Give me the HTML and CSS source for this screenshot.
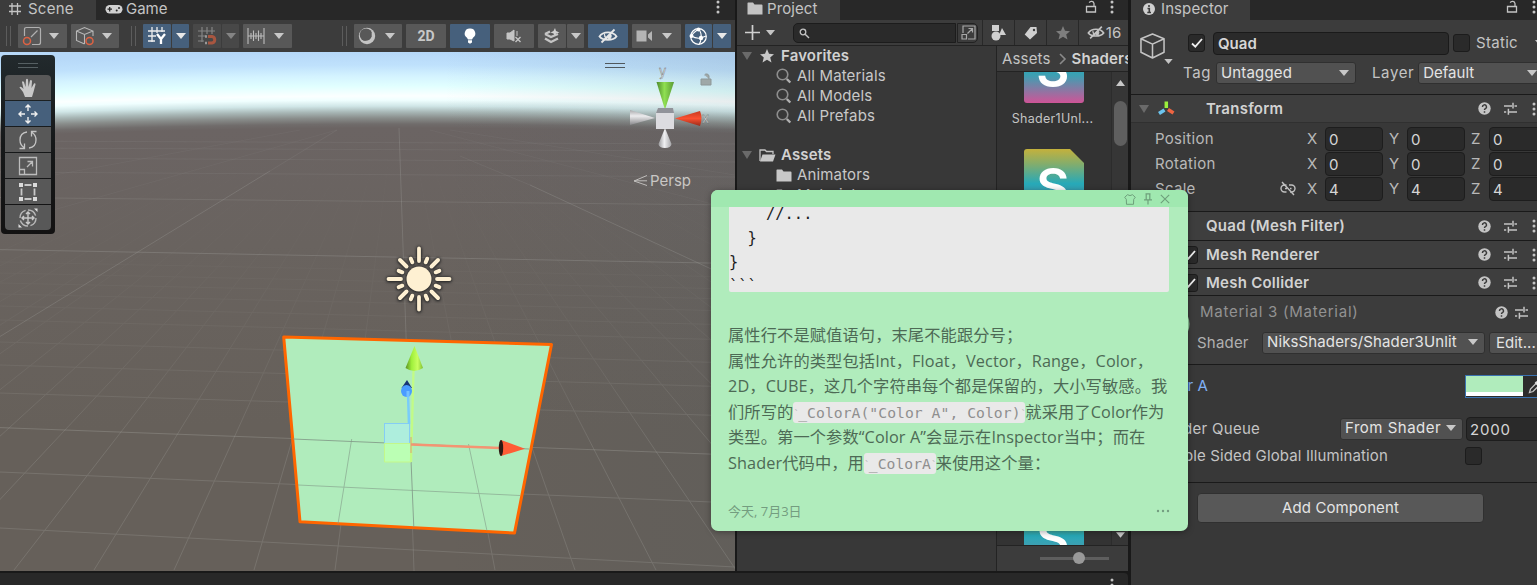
FILE: index.html
```html
<!DOCTYPE html>
<html lang="zh-CN">
<head>
<meta charset="utf-8">
<title>Scene editor</title>
<link rel="stylesheet" href="styles.css">
</head>
<body>
<svg class="defs" width="0" height="0">
  <defs>
    <linearGradient id="shaderFill" x1="0" y1="0" x2="0" y2="1">
      <stop offset="0" stop-color="#c4b13c"/><stop offset=".2" stop-color="#86ad6a"/><stop offset=".48" stop-color="#27a9b8"/><stop offset=".62" stop-color="#3e9fb2"/><stop offset="1" stop-color="#cf5497"/>
    </linearGradient>
    <linearGradient id="fade" x1="0" y1="0" x2="0" y2="1">
      <stop offset=".14" stop-color="#000"/><stop offset=".35" stop-color="#1c1c1c"/><stop offset=".52" stop-color="#555"/><stop offset=".64" stop-color="#999"/><stop offset=".78" stop-color="#fff"/>
    </linearGradient>
    <mask id="fadeMask" maskUnits="userSpaceOnUse" x="0" y="52" width="735" height="519"><rect x="0" y="52" width="735" height="519" fill="url(#fade)"/></mask>
    <linearGradient id="greenCone"><stop offset="0" stop-color="#4d8a2c"/><stop offset=".45" stop-color="#90e052"/><stop offset="1" stop-color="#5a9b35"/></linearGradient>
    <linearGradient id="limeCone"><stop offset="0" stop-color="#5a8f22"/><stop offset=".35" stop-color="#a0f03c"/><stop offset=".7" stop-color="#c8ff60"/><stop offset="1" stop-color="#7fbf30"/></linearGradient>
    <linearGradient id="redCone" x1="0" y1="0" x2="0" y2="1"><stop offset="0" stop-color="#c63a20"/><stop offset=".5" stop-color="#fa5030"/><stop offset="1" stop-color="#9a2c1a"/></linearGradient>
    <linearGradient id="whiteH"><stop offset="0" stop-color="#9a9a9d"/><stop offset=".45" stop-color="#f0f0f2"/><stop offset="1" stop-color="#a5a5a8"/></linearGradient>
    <linearGradient id="whiteV" x1="0" y1="0" x2="0" y2="1"><stop offset="0" stop-color="#a8a8ab"/><stop offset=".4" stop-color="#ececee"/><stop offset="1" stop-color="#88888b"/></linearGradient>
    <symbol id="caret" viewBox="0 0 10 6"><path d="M0 0H10L5 6Z"/></symbol>
    <symbol id="dots" viewBox="0 0 4 14"><circle cx="2" cy="2" r="1.5"/><circle cx="2" cy="7" r="1.5"/><circle cx="2" cy="12" r="1.5"/></symbol>
    <symbol id="lock" viewBox="0 0 12 13"><path d="M1.500 6.500H10.500V12H1.500ZM9 6V3.500A2.600 2.600 0 0 0 4.200 2.600" fill="none" stroke="currentColor" stroke-width="1.300"/></symbol>
    <symbol id="folder" viewBox="0 0 16 13"><path d="M1 .5H6L7.500 2.500H14.500Q15.500 2.500 15.500 3.500V12.500H.5V1Z"/></symbol>
    <symbol id="star" viewBox="0 0 14 14"><path d="M7 0L9 4.800L14 5.200L10.200 8.500L11.500 13.600L7 10.800L2.500 13.600L3.800 8.500L0 5.200L5 4.800Z"/></symbol>
    <symbol id="search" viewBox="0 0 16 16"><circle cx="6.500" cy="6.500" r="5.300" fill="none" stroke="#8e8e8e" stroke-width="1.600"/><path d="M10.800 11L14.300 14.500" stroke="#b0b0b0" stroke-width="2.400"/></symbol>
    <symbol id="eyeoff" viewBox="0 0 20 16"><path d="M1.500 8.500C5 3 15 3 18.500 8.500C15 13 5 13 1.500 8.500Z" fill="none" stroke="currentColor" stroke-width="1.800"/><path d="M6.500 6Q6 10 9 11M9 9.500L12.500 5.500Q14 8 12.500 10.500Q10.500 12 9 9.500Z" fill="currentColor" stroke="currentColor" stroke-width="1"/><path d="M3.500 14.500L16.500 1.500" stroke="currentColor" stroke-width="1.800"/></symbol>
    <symbol id="help" viewBox="0 0 13 13"><circle cx="6.500" cy="6.500" r="6.200"/><path d="M4.500 5A2 2 0 1 1 7.400 6.600Q6.500 7 6.500 8M6.500 9.200V10.800" fill="none" stroke="#3a3a3a" stroke-width="1.500"/></symbol>
    <symbol id="preset" viewBox="0 0 13 13"><path d="M0 4H8M10.500 4H13M9 .8V6.500M0 10H2.200M5 10H13M4.400 6.800V12.800" fill="none" stroke="currentColor" stroke-width="1.500"/></symbol>
    <symbol id="cube" viewBox="0 0 26 27"><path d="M13 1L25 6V20L13 26L1 20V6ZM1 6L13 11.500L25 6M13 11.500V26" fill="none" stroke="currentColor" stroke-width="1.600" stroke-linejoin="round"/></symbol>
    <symbol id="check" viewBox="0 0 12 10"><path d="M1 5.500L4.300 8.700L11 1" fill="none" stroke="#eee" stroke-width="1.800"/></symbol>
    <symbol id="shader" viewBox="0 0 60 72"><path d="M3 0H46L60 14V69Q60 72 57 72H3Q0 72 0 69V3Q0 0 3 0Z" fill="url(#shaderFill)"/><text x="29" y="56" text-anchor="middle" class="shader-s">S</text></symbol>
  </defs>
</svg>
<div class="editor">
  <div class="left">
    <div class="docks">
      <section class="scene">
        <header class="tabs">
          <div class="tab scene-tab">
            <svg width="14" height="14" viewBox="0 0 14 14"><path d="M4 1V13M9.500 1V13M1 4H13M1 9.500H13" stroke="#c4c4c4" stroke-width="1.300"/></svg><span>Scene</span></div>
          <div class="tab game-tab">
            <svg width="18" height="11" viewBox="0 0 18 11"><rect x=".5" y="1" width="17" height="8.500" rx="4.200" fill="#d0d0d0"/><path d="M2.500 5.200H7M4.700 3V7.500" stroke="#282828" stroke-width="1.300"/><circle cx="11.700" cy="6.500" r="1" fill="#282828"/><circle cx="14" cy="4" r="1" fill="#282828"/></svg><span>Game</span></div>
          <svg class="menu" width="4" height="14"><use href="#dots"/></svg>
        </header>
        <div class="toolbar">
          <i class="grip"></i>
          <button class="b w49"><svg width="20" height="20" viewBox="0 0 20 20"><path d="M2.500 10V3.500Q2.500 1.500 4.500 1.500H16.500Q18.500 1.500 18.500 3.500V16.500Q18.500 18.500 16.500 18.500H10M9 11L15.500 4.500" fill="none" stroke="#b0b0b0" stroke-width="1.200"/><circle cx="5" cy="15" r="3.500" fill="none" stroke="#dd6243" stroke-width="1.500"/></svg><svg width="10" height="6"><use href="#caret"/></svg></button>
          <button class="b w48 gap4"><svg width="20" height="20" viewBox="0 0 20 20"><path d="M9.500 18L1.500 14.500V5L9.500 1.500L18 5V10M1.500 5L9.500 8.500L18 5M9.500 8.500V18" fill="none" stroke="#b8b8b8" stroke-width="1.100"/><circle cx="14.500" cy="15" r="3.500" fill="none" stroke="#dd6243" stroke-width="1.500"/></svg><svg width="10" height="6"><use href="#caret"/></svg></button>
          <i class="grip g2"></i>
          <button class="b w28 on"><svg width="19" height="18" viewBox="0 0 19 18"><path d="M4 0V15M9 0V6M14 0V5M0 4H17M0 9H8M0 14H7" stroke="#eee" stroke-width="1.300"/><path d="M9 7L13 12V17M17 7L13 12" stroke="#fff" stroke-width="2.300" fill="none"/></svg></button>
          <button class="b w17 on"><svg width="10" height="6"><use href="#caret"/></svg></button>
          <button class="b w28 off gap4"><svg width="19" height="18" viewBox="0 0 19 18"><path d="M4 0V15M9 0V7M14 0V7M0 4H17M0 9H8M0 14H6" stroke="#858585" stroke-width="1.200"/><path d="M10 9.500H14A3.300 3.300 0 0 1 14 16H10" stroke="#a85640" stroke-width="3" fill="none"/><path d="M7 9.500H9M7 16H9" stroke="#999" stroke-width="2.500"/></svg></button>
          <button class="b w17 off"><svg width="10" height="6"><use href="#caret"/></svg></button>
          <button class="b w49 gap4"><svg width="18" height="18" viewBox="0 0 18 18"><path d="M1 1V17M17 1V17M4 6V12M6.500 3.500V14M9 6V12M11.500 3.500V14M14 6V12M1 9H17" stroke="#bdbdbd" stroke-width="1.100"/></svg><svg class="near" width="10" height="6"><use href="#caret"/></svg></button>
          <i class="grip g3"></i>
          <button class="b w48"><svg width="18" height="18" viewBox="0 0 18 18"><circle cx="9" cy="9" r="8.200" fill="#c4c4c4"/><circle cx="8" cy="7.800" r="6.300" fill="#585858"/><path d="M14.500 6V10Q12 15 7.500 14.500" fill="none" stroke="#c4c4c4" stroke-width="1.600"/></svg><svg class="near" width="10" height="6"><use href="#caret"/></svg></button>
          <button class="b w40 gap4 two">2D</button>
          <button class="b w40 gap4 on"><svg width="12" height="16" viewBox="0 0 12 16"><path d="M6 .5A5 5 0 0 1 9 9.700L8 11.500H4L3 9.700A5 5 0 0 1 6 .5ZM4 12.300H8V14.500L6 15.700L4 14.500Z" fill="#fff"/></svg></button>
          <button class="b w40 gap4"><svg width="16" height="14" viewBox="0 0 16 14"><path d="M1 4H4L8 1V12L4 10H1ZM11 2V7" fill="#c4c4c4" stroke="#c4c4c4"/><path d="M9.500 8L14.500 13M14.500 8L9.500 13" stroke="#c4c4c4" stroke-width="1.400"/></svg></button>
          <button class="b w28 gap4"><svg width="16" height="16" viewBox="0 0 16 16"><path d="M1 6L7 9L14 6M1 6L6 3.500M1 10.500L7 14L14 10.500" fill="none" stroke="#c4c4c4" stroke-width="2.300"/><path d="M11 0L12 3L15.500 4.500L12 5.500L11 8L9.500 5.500L6.500 4.500L9.500 3Z" fill="#d0d0d0"/></svg></button>
          <button class="b w17"><svg width="10" height="6"><use href="#caret"/></svg></button>
          <button class="b w40 gap4 on"><svg width="20" height="16"><use href="#eyeoff"/></svg></button>
          <button class="b w49 gap4"><svg width="17" height="12" viewBox="0 0 17 12"><path d="M.5 .5H10.500V11.500H.5ZM12 4.500L16 1V11L12 7.500Z" fill="#b4b4b4"/></svg><svg class="near" width="10" height="6"><use href="#caret"/></svg></button>
          <button class="b w27 gap4 on"><svg width="19" height="19" viewBox="0 0 19 19"><circle cx="9.500" cy="9.500" r="7.800" fill="none" stroke="#fff" stroke-width="1.200"/><path d="M9.500 2Q13 6 12 11Q12 15 10 17.500M2.500 9Q7 12 12 11L17 9M9.500 2Q3 7 2.500 9" stroke="#fff" stroke-width="1.100" fill="none"/><circle cx="9.500" cy="2.500" r="2" fill="#fff"/><circle cx="2.500" cy="9" r="2" fill="#fff"/><circle cx="12" cy="11" r="2.200" fill="#fff"/></svg></button>
          <button class="b w18 on"><svg width="10" height="6"><use href="#caret"/></svg></button>
        </div>
        <div class="viewport">
          <svg class="world" width="735" height="519" viewBox="0 52 735 519">
            <g fill="none" stroke="#a7a7a2" stroke-width="1">
              <g mask="url(#fadeMask)" opacity=".26">
                <path d="M400 72L-1190 570M400 72L-1030 570M400 72L-869 570M400 72L-709 570M400 72L-628 570M400 72L-548 570M400 72L-468 570M400 72L-387 570M400 72L-307 570M400 72L-227 570M400 72L-147 570M400 72L-66 570M400 72L14 570M400 72L94 570M400 72L174 570M400 72L254 570M400 72L335 570M400 72L495 570M400 72L575 570M400 72L656 570M400 72L736 570M400 72L817 570M400 72L897 570M400 72L978 570M400 72L1058 570M400 72L1138 570M400 72L1298 570M400 72L1379 570M400 72L1459 570M400 72L1539 570M400 72L1700 570M400 72L1860 570M400 72L2020 570"/>
                <path d="M0 262L735 277M0 273L735 289M0 283L735 299M0 294L735 311M0 306L735 325M0 320L735 340M0 342L735 363M0 365L735 387M0 393L735 416M0 472L735 503M0 528L735 567"/>
              </g>
              <path d="M0 427.600L735 455" opacity=".34"/>
              <path d="M0 249.600L735 263.500" opacity=".3"/>
              <path d="M0 197.500L735 205" opacity=".2"/>
              <path d="M0 172L735 177M0 158L735 162M0 148L735 151M0 141L735 144" opacity=".12"/>
              <path d="M270 171L0 336.500M530 185L735 280" opacity=".28"/>
              <path d="M337 130L270 171M460 156L530 185" opacity=".12"/>
              <path d="M337 130L0 225M300 130L0 185M430 130L735 210M450 130L735 175" opacity=".08"/>
              <path d="M399 128L414 571" opacity=".28"/>
            </g>
            <path d="M283.700 337L551.500 344.500L514.500 533L300 521.800Z" fill="#b0ecbc" stroke="#ff6600" stroke-width="3" stroke-linejoin="round"/>
            <path d="M298 485L520 495.500M351.700 439L338 524M468.500 444L487 531" stroke="#829a88" stroke-width="1" opacity=".6"/>
            <path d="M293 439L529 449M411 460L413.800 527" stroke="#829a88" opacity=".85"/>
            <rect x="384.500" y="423.500" width="25" height="20" fill="#aeeedd" stroke="#85cdf5"/>
            <path d="M384.500 443.500H411V462H384.500Z" fill="#bbffb4" stroke="#c3f78a"/>
            <path d="M408 393L409 424" stroke="#79ccfa" stroke-width="2.500"/>
            <path d="M413.500 371L411 462" stroke="#c2fb86" stroke-width="2.300"/>
            <path d="M411 444.500L500 448" stroke="#f49472" stroke-width="2.400"/>
            <path d="M411 437V453" stroke="#dd9e78" stroke-width="1"/>
            <path d="M414.500 346L423 368Q414 374 405.500 368Z" fill="url(#limeCone)"/>
            <path d="M407 380L412 388H401.500Z" fill="#183474"/><ellipse cx="406.500" cy="391" rx="5.500" ry="6" fill="#4a9cff"/><path d="M408 391V397" stroke="#75c0ff" stroke-width="3"/>
            <path d="M501 440L525 448.800L501 456Z" fill="#ff5c35"/><ellipse cx="501" cy="448" rx="2.200" ry="8" fill="#2e1a14"/>
            <g class="sun">
              <circle cx="419" cy="279" r="12.500"/>
              <g class="rays">
                <path d="M419 248.500V261M419 297V309.500M388.500 279H401M437 279H449.500" stroke-width="3.800"/>
                <path d="M400 260L406.500 266.500M438 260L431.500 266.500M400 298L406.500 291.500M438 298L431.500 291.500" stroke-width="4"/>
                <path d="M410.800 258.700L412.300 262.300M427.200 258.700L425.700 262.300M410.800 299.300L412.300 295.700M427.200 299.300L425.700 295.700M398.700 270.800L402.300 272.300M398.700 287.200L402.300 285.700M439.300 270.800L435.700 272.300M439.300 287.200L435.700 285.700" stroke-width="4"/>
              </g>
            </g>
            <path d="M605 63.500H625M605 67.500H625" stroke="#50585d" stroke-width="1"/>
            <path d="M656.500 82H674L665.500 108H664.500Z" fill="url(#greenCone)"/>
            <path d="M630 110L655 118L630 125Z" fill="url(#whiteV)"/>
            <path d="M675 118.500L700 111Q703 118 700 126Z" fill="url(#redCone)"/>
            <path d="M656 113L658 108H673L674 113V129H656Z" fill="#dcdce0"/><path d="M656 113L658 108H673L674 113Z" fill="#91939a"/>
            <path d="M665 128L671.500 144Q671 148 665 148Q659 148 658.500 144Z" fill="url(#whiteH)"/>
            <text x="659" y="76" class="axis">y</text><text x="702" y="122.500" class="axis">x</text>
            <path d="M701 79H711V85H701ZM709 79V76A2.500 2.500 0 0 0 704.500 75" fill="#9fa8a8" stroke="#8e9898"/>
            <path d="M647 175.500L634 181L647 185.500M634 180.800H647" fill="none" stroke="#c0bebc" stroke-width="1"/>
            <text x="650" y="186" class="persp">Persp</text>
          </svg>
          <div class="tools">
            <i class="handle"></i>
            <div class="tool"><svg width="20" height="20" viewBox="0 0 20 20"><path d="M7 19L5 14L1.500 9.500Q2 8 4 9.500L5.500 11L4 4Q4.500 2.500 6 4L7.500 9L8 1.500Q9 .2 10 1.500L10.500 9L12 2.500Q13.300 1.500 14 3L13.500 10L16 5.500Q17.500 4.700 17.500 6.500L15.500 14L14 19Z" fill="#c8c8c8"/></svg></div>
            <div class="tool on"><svg width="20" height="20" viewBox="0 0 20 20"><path d="M10 1V7M10 13V19M1 10H7M13 10H19M7.500 3.500L10 1L12.500 3.500M7.500 16.500L10 19L12.500 16.500M3.500 7.500L1 10L3.500 12.500M16.500 7.500L19 10L16.500 12.500" fill="none" stroke="#f0f0f0" stroke-width="1.400"/></svg></div>
            <div class="tool"><svg width="20" height="20" viewBox="0 0 20 20"><path d="M9 2Q2 3 2 10Q2 15 6 17.500M1.500 18.500H6.500V13.500M11 18Q18 17 18 10Q18 5 14 2.500M18.500 1.500H13.500V6.500" fill="none" stroke="#c4c4c4" stroke-width="1.300"/></svg></div>
            <div class="tool"><svg width="20" height="20" viewBox="0 0 20 20"><path d="M1.500 1.500H18.500V18.500H1.500ZM1.500 13.500H6.500V18.500M9 11L14.500 5.500M9.500 5.500H14.500V10.500" fill="none" stroke="#bcbcbc" stroke-width="1.300"/></svg></div>
            <div class="tool"><svg width="20" height="20" viewBox="0 0 20 20"><path d="M1 1H5V5H1ZM15 1H19V5H15ZM1 15H5V19H1ZM15 15H19V19H15Z" fill="#dadada"/><path d="M6.500 3H13.500M6.500 17H13.500M3.500 6.500V13.500M16.500 6.500V13.500" stroke="#c8c8c8" stroke-width="1.800"/></svg></div>
            <div class="tool"><svg width="20" height="20" viewBox="0 0 20 20"><circle cx="10" cy="10" r="8" fill="none" stroke="#b8b8b8" stroke-width="1.400" stroke-dasharray="10 2.500"/><path d="M10 4V16M4 10H16M8 6L10 4L12 6M8 14L10 16L12 14M6 8L4 10L6 12M14 8L16 10L14 12" fill="none" stroke="#c8c8c8" stroke-width="1.400"/><path d="M16 .5H19.500V4ZM.5 16V19.500H4Z" fill="#ddd"/></svg></div>
          </div>
        </div>
      </section>
      <section class="project">
        <header class="tabs">
          <div class="tab project-tab"><svg width="16" height="13"><use href="#folder"/></svg><span>Project</span></div>
          <svg class="plock" width="12" height="13"><use href="#lock"/></svg>
          <svg class="menu" width="4" height="14"><use href="#dots"/></svg>
        </header>
        <div class="pbar">
          <svg class="plus" width="15" height="15" viewBox="0 0 15 15"><path d="M7.500 0V15M0 7.500H15" stroke="#d0d0d0" stroke-width="1.700"/></svg>
          <svg class="pluscar" width="9" height="5.400"><use href="#caret"/></svg>
          <div class="find"><svg width="11" height="11" viewBox="0 0 11 11"><circle cx="4" cy="4" r="2.800" fill="none" stroke="#c4c4c4" stroke-width="1.300"/><path d="M6.200 6.200L10 10" stroke="#c4c4c4" stroke-width="1.400"/></svg></div>
          <div class="expand"><svg width="15" height="15" viewBox="0 0 15 15"><path d="M2 8V1H14V14H7M1 9.500H5.500V14H1ZM6.500 8.500L11.500 3.500M7.500 3.500H11.500V7.500" fill="none" stroke="#a8a8a8" stroke-width="1.200"/></svg></div>
          <div class="pb"><svg width="15" height="17" viewBox="0 0 15 17"><path d="M1 1H8V7H1ZM11 4L15 11H8Z" fill="#cfcfcf"/><circle cx="5" cy="12" r="4.500" fill="#cfcfcf"/></svg></div>
          <div class="pb"><svg width="14" height="14" viewBox="0 0 14 14"><path d="M6.500 1H12.500L13 7L6 13.500L.7 8.500Z" fill="#d0d0d0"/><circle cx="10" cy="4" r="1.200" fill="#3c3c3c"/></svg></div>
          <div class="pb dim"><svg width="14" height="14"><use href="#star"/></svg></div>
          <div class="pb hidden-count"><svg width="18" height="15"><use href="#eyeoff"/></svg><span>16</span></div>
        </div>
        <div class="pbody">
          <div class="tree">
            <div class="row group"><svg class="fold" width="10" height="8" viewBox="0 0 10 8"><path d="M0 0H10L5 8Z"/></svg><svg width="14" height="14"><use href="#star"/></svg><b>Favorites</b></div>
            <div class="row"><svg width="16" height="16"><use href="#search"/></svg><span>All Materials</span></div>
            <div class="row"><svg width="16" height="16"><use href="#search"/></svg><span>All Models</span></div>
            <div class="row"><svg width="16" height="16"><use href="#search"/></svg><span>All Prefabs</span></div>
            <div class="row group assets"><svg class="fold" width="10" height="8" viewBox="0 0 10 8"><path d="M0 0H10L5 8Z"/></svg><svg width="17" height="13" viewBox="0 0 17 13"><path d="M1 12V1H6L7.500 2.500H14V5" fill="none" stroke="#c4c4c4" stroke-width="1.300"/><path d="M3.500 5.500H16.500L14 12.500H1Z" fill="#c8c8c8"/></svg><b>Assets</b></div>
            <div class="row"><svg width="16" height="13"><use href="#folder"/></svg><span>Animators</span></div>
            <div class="row"><svg width="16" height="13"><use href="#folder"/></svg><span>Materials</span></div>
          </div>
          <div class="browser">
            <div class="crumbs"><span>Assets</span><svg width="7" height="12" viewBox="0 0 7 12"><path d="M1 1L6 6L1 11" fill="none" stroke="#8a8a8a" stroke-width="1.600"/></svg><b>Shaders</b></div>
            <div class="files">
              <div class="grid">
                <div class="file"><svg width="60" height="72"><use href="#shader"/></svg><span>Shader1Unl...</span></div>
                <div class="file"><svg width="60" height="72"><use href="#shader"/></svg></div>
                <div class="file"></div>
                <div class="file"></div>
                <div class="file"><svg width="60" height="72"><use href="#shader"/></svg></div>
              </div>
              <div class="scroll"><svg width="9" height="6" viewBox="0 0 9 6"><path d="M0 6L4.500 0L9 6Z"/></svg><i></i><svg width="9" height="6"><use href="#caret"/></svg></div>
            </div>
            <div class="zoom"><i></i></div>
          </div>
        </div>
      </section>
    </div>
    <footer class="bottom"><svg width="4" height="14"><use href="#dots"/></svg></footer>
  </div>
  <section class="inspector">
    <header class="tabs">
      <div class="tab inspector-tab"><svg width="12" height="12" viewBox="0 0 12 12"><circle cx="6" cy="6" r="6" fill="#d0d0d0"/><path d="M6 2V4M4.500 5.500H6.300V9.300M4.300 9.500H8" stroke="#3c3c3c" stroke-width="1.600" fill="none"/></svg><span>Inspector</span></div>
      <svg class="plock" width="12" height="13"><use href="#lock"/></svg>
      <svg class="menu" width="4" height="14"><use href="#dots"/></svg>
    </header>
    <div class="object">
      <div class="objicon"><svg width="25" height="26" viewBox="0 0 26 27"><use href="#cube" width="26" height="27"/></svg><svg class="objcar" width="9" height="5"><use href="#caret"/></svg></div>
      <div class="objfields">
        <div class="line"><i class="box"><svg width="12" height="10"><use href="#check"/></svg></i><div class="name">Quad</div><i class="box"></i><span class="static">Static</span><svg class="scar" width="10" height="6"><use href="#caret"/></svg></div>
        <div class="line two-line"><span>Tag</span><div class="drop tag">Untagged<svg width="10" height="6"><use href="#caret"/></svg></div><span class="layer">Layer</span><div class="drop lay">Default<svg width="10" height="6"><use href="#caret"/></svg></div></div>
      </div>
    </div>
    <div class="comp transform"><svg class="fold" width="10" height="8" viewBox="0 0 10 8"><path d="M0 0H10L5 8Z"/></svg><svg class="tri" width="17" height="15" viewBox="0 0 17 15"><path d="M8.300 .5V7" stroke="#9bee3c" stroke-width="3.500"/><path d="M6.500 9L1 12.500" stroke="#6cc4ee" stroke-width="3.600"/><path d="M10 8.500L15.500 12" stroke="#ee6542" stroke-width="3.600"/></svg><b>Transform</b><svg class="help" width="13" height="13"><use href="#help"/></svg><svg class="pre" width="13" height="13"><use href="#preset"/></svg><svg class="cm" width="4" height="14"><use href="#dots"/></svg></div>
    <div class="vectors">
      <div class="vec"><span class="lbl">Position</span><em>X</em><div class="fld">0</div><em>Y</em><div class="fld">0</div><em>Z</em><div class="fld">0</div></div>
      <div class="vec"><span class="lbl">Rotation</span><em>X</em><div class="fld">0</div><em>Y</em><div class="fld">0</div><em>Z</em><div class="fld">0</div></div>
      <div class="vec"><span class="lbl">Scale</span><svg class="link" width="16" height="13" viewBox="0 0 16 13"><path d="M6.500 3H4.500A3.400 3.400 0 0 0 4.500 10H6.500M9 3H11.500A3.400 3.400 0 0 1 11.500 10H10M5 6.500H7M10 6.500H11.500M2 0L14 13" fill="none" stroke="#c0c0c0" stroke-width="1.400"/></svg><em>X</em><div class="fld">4</div><em>Y</em><div class="fld">4</div><em>Z</em><div class="fld">4</div></div>
    </div>
    <div class="comp filter"><b>Quad (Mesh Filter)</b><svg class="help" width="13" height="13"><use href="#help"/></svg><svg class="pre" width="13" height="13"><use href="#preset"/></svg><svg class="cm" width="4" height="14"><use href="#dots"/></svg></div>
    <div class="comp renderer"><i class="box"><svg width="12" height="10"><use href="#check"/></svg></i><b>Mesh Renderer</b><svg class="help" width="13" height="13"><use href="#help"/></svg><svg class="pre" width="13" height="13"><use href="#preset"/></svg><svg class="cm" width="4" height="14"><use href="#dots"/></svg></div>
    <div class="comp collider"><i class="box"><svg width="12" height="10"><use href="#check"/></svg></i><b>Mesh Collider</b><svg class="help" width="13" height="13"><use href="#help"/></svg><svg class="pre" width="13" height="13"><use href="#preset"/></svg><svg class="cm" width="4" height="14"><use href="#dots"/></svg></div>
    <div class="material">
      <div class="mtitle"><span>Material 3 (Material)</span><svg class="help" width="13" height="13"><use href="#help"/></svg><svg class="pre" width="13" height="13"><use href="#preset"/></svg></div>
      <div class="mshader"><svg class="ball" width="14" height="38" viewBox="0 0 14 38"><circle cx="-10.500" cy="19" r="19" fill="#8fc79b"/></svg><span>Shader</span><div class="drop shad">NiksShaders/Shader3Unlit<svg width="10" height="6"><use href="#caret"/></svg></div><div class="edit">Edit...</div></div>
    </div>
    <div class="props">
      <div class="prop color"><span class="plabel">Color A</span><div class="swatch"><i></i><svg width="15" height="15" viewBox="0 0 15 15"><path d="M1.500 13.500L2.500 10L8.500 4L11 6.500L5 12.500Z" fill="none" stroke="#c4c4c4" stroke-width="1.300"/><path d="M7.500 3L12 7.500M10 5L13 2" stroke="#ddd" stroke-width="2.500"/></svg></div></div>
      <div class="prop queue"><span class="plabel">Render Queue</span><div class="drop q">From Shader<svg width="10" height="6"><use href="#caret"/></svg></div><div class="fld num">2000</div></div>
      <div class="prop gi"><span class="plabel">Double Sided Global Illumination</span><i class="box"></i></div>
    </div>
    <div class="addwrap"><div class="add">Add Component</div></div>
  </section>
</div>
<aside class="note">
  <div class="nhead">
    <svg width="12" height="11" viewBox="0 0 12 11"><path d="M3.500 .7Q6 2.500 8.500 .7L11.300 3.300L9.700 5.300L9.500 10.300H2.500L2.300 5.300L.7 3.300Z" fill="none" stroke="#6e9f7b"/></svg>
    <svg width="10" height="12" viewBox="0 0 10 12"><path d="M2.500 .8H7.500M3.200 1V6.200M6.800 1V6.200M1 6.800H9M5 7V11.500" fill="none" stroke="#6e9f7b" stroke-width="1.200"/></svg>
    <svg width="10" height="10" viewBox="0 0 10 10"><path d="M.8 .8L9.200 9.200M9.200 .8L.8 9.200" stroke="#6e9f7b" stroke-width="1.100"/></svg>
  </div>
  <div class="codebox"><pre class="code">    //...
  }
}
```</pre></div>
  <div class="text">
    <p>属性行不是赋值语句，末尾不能跟分号；</p>
    <p>属性允许的类型包括Int，Float，Vector，Range，Color，</p>
    <p>2D，CUBE，这几个字符串每个都是保留的，大小写敏感。我</p>
    <p>们所写的<code><s>`</s>_ColorA("Color A", Color)<s>`</s></code>就采用了Color作为</p>
    <p>类型。第一个参数“Color A”会显示在Inspector当中；而在</p>
    <p>Shader代码中，用<code><s>`</s>_ColorA<s>`</s></code>来使用这个量：</p>
  </div>
  <div class="nfoot"><span>今天, 7月3日</span><svg width="14" height="4" viewBox="0 0 14 4"><circle cx="2" cy="2" r="1.200"/><circle cx="7" cy="2" r="1.200"/><circle cx="12" cy="2" r="1.200"/></svg></div>
</aside>
</body>
</html>
```
FILE: styles.css
```css
* { box-sizing: border-box; }
html, body { margin: 0; height: 585px; overflow: hidden; }
body { position: relative; background: #191919; color: #c4c4c4; font: 15px/20px Inter, "Noto Sans CJK SC", sans-serif; white-space: nowrap; }
svg { display: block; flex: none; fill: currentColor; overflow: visible; }
i, em, s { font-style: normal; text-decoration: none; display: block; }
b { font-weight: 600; color: #d2d2d2; }
.defs { position: absolute; }
.editor { display: flex; gap: 3px; height: 585px; }
.left { width: 1128px; flex: none; display: flex; flex-direction: column; }
.docks { display: flex; gap: 2px; height: 571px; }
.tabs { height: 20px; background: #282828; display: flex; align-items: flex-start; flex: none; overflow: hidden; }
.tab { height: 20px; display: flex; line-height: 18px; flex: none; }
.tab svg { margin-top: 2px; }
.scene-tab { width: 96px; background: #3c3c3c; padding-left: 8px; gap: 6px; letter-spacing: .25px; }
.game-tab { padding-left: 9px; gap: 3px; }
.game-tab svg { margin-top: 4px; }
.menu { margin: 0 15px 0 auto; }
.scene { width: 735px; flex: none; display: flex; flex-direction: column; }
.toolbar { height: 32px; background: #3c3c3c; display: flex; align-items: center; padding-left: 6px; flex: none; }
.grip { width: 5px; height: 20px; border: solid #5c5c5c; border-width: 0 1px; margin-right: 7px; flex: none; }
.g2 { margin-left: 12px; }
.g3 { margin-left: 50px; }
.b { border: 0; padding: 0; height: 24px; background: #585858; color: #c8c8c8; display: flex; align-items: center; justify-content: center; gap: 8px; margin: 0; flex: none; border-radius: 1px; font: 700 14px/24px Roboto, sans-serif; }
.b.w49, .b.w48 { justify-content: flex-start; padding-left: 4px; gap: 7px; }
.near { margin-left: 2px; }
.b + .b { margin-left: 1px; }
.b + .b.gap4 { margin-left: 4px; }
.w49 { width: 49px; } .w48 { width: 48px; } .w40 { width: 40px; } .w28 { width: 28px; } .w27 { width: 27px; } .w18 { width: 18px; } .w17 { width: 17px; }
.on { background: #46607c; color: #e8e8e8; }
.off { background: #484848; color: #848484; }
.viewport { height: 519px; position: relative; background:
  linear-gradient(90deg, rgba(60,60,60,0) 60%, rgba(60,80,90,.1)),
  radial-gradient(circle at 400px 9772px, #66605a 9400px, #69635f 9580px, #6b6463 9696px, #706c6b 9700px, #898d8b 9706px, #a8b7b6 9712px, #d0e6e7 9718px, #f0ffff 9724px, #fbffff 9728px, #e1ffff 9738px, #d4f3ff 9748px, #bfe1fc 9759px, #b6d8f8 9772px); }
.world { overflow: hidden; }
.sun { fill: #fef0d2; filter: drop-shadow(0 0 1.500px #222) drop-shadow(0 1px 1px #333); }
.rays { stroke: #fef0d2; stroke-linecap: round; }
.axis { font: 13px Inter, sans-serif; fill: #e4e9e9; stroke: #666; stroke-width: .4px; }
.persp { font: 15px Inter, sans-serif; fill: #c9c7c5; }
.tools { position: absolute; left: 1px; top: 3px; width: 54px; height: 179px; border-radius: 4px; background: linear-gradient(#222a2d, #161819 50%, #131212); padding: 8px 4px 0; display: flex; flex-direction: column; gap: 1px; }
.handle { width: 20px; height: 5px; border: solid #566063; border-width: 1px 0; margin: 0 auto 6px 13px; }
.tool { height: 25px; background: #585858; display: flex; align-items: center; justify-content: center; }
.tool.on { background: #46607c; }
.handle + .tool { border-radius: 4px 4px 0 0; }
.tool:last-child { border-radius: 0 0 4px 4px; }
.project { width: 391px; flex: none; display: flex; flex-direction: column; background: #383838; }
.project-tab { width: 103px; background: #3c3c3c; padding-left: 10px; gap: 4px; letter-spacing: .1px; }
.plock { margin-left: auto; margin-top: 0; }
.plock + .menu { margin: 0 14px 0 13px; }
.pbar { height: 26px; background: #3c3c3c; border-bottom: 1px solid #232323; display: flex; align-items: center; padding-left: 8px; flex: none; }
.pluscar { margin: 0 18px 0 6px; }
.find { width: 163px; height: 20px; border: 1px solid #1c1c1c; border-radius: 5px 0 0 5px; background: #2a2a2a; padding: 4px 5px; flex: none; }
.expand { width: 21px; height: 20px; margin-left: 1px; border: 1px solid #222; border-radius: 0 5px 5px 0; padding: 1px 3px; flex: none; }
.pb { height: 25px; width: 32px; border-left: 1px solid #282828; display: flex; align-items: center; justify-content: center; flex: none; }
.expand + .pb { margin-left: 4px; }
.pb.hidden-count { width: 50px; padding-left: 1px; gap: 1px; }
.dim { color: #7e7e7e; }
.pbody { display: flex; height: 525px; }
.tree { width: 260px; border-right: 1px solid #232323; color: #c8c8c8; overflow: hidden; letter-spacing: .15px; flex: none; }
.row { height: 20px; padding-left: 39px; display: flex; align-items: center; gap: 5px; flex: none; }
.group { padding-left: 5px; gap: 7px; }
.group .fold { margin-right: 1px; }
.fold { color: #6a6a6a; }
.assets { margin-top: 19px; gap: 5px; }
.assets .fold { margin-right: 2px; }
.browser { width: 131px; flex: none; overflow: hidden; }
.crumbs { height: 26px; border-bottom: 1px solid #232323; background: #3c3c3c; padding-left: 5px; display: flex; align-items: center; gap: 8px; letter-spacing: .15px; }
.crumbs svg { margin: 0 -2px 0 0; }
.files { height: 473px; overflow: hidden; display: flex; background: #333; }
.grid { width: 114px; margin-top: -41px; flex: none; }
.file { height: 117.500px; display: flex; flex-direction: column; align-items: center; font-size: 12.500px; letter-spacing: .3px; gap: 6px; }
.file span { margin-left: -3px; }
.shader-s { font: 600 51px Inter, sans-serif; fill: #fff; }
.scroll { width: 17px; border-left: 1px solid #2c2c2c; background: #363636; display: flex; flex-direction: column; align-items: center; color: #c8c8c8; padding: 8px 0 7px; flex: none; }
.scroll i { width: 13px; height: 45px; border-radius: 7px; background: #5f5f5f; margin: 15px 0 auto; }
.zoom { height: 26px; background: #3c3c3c; border-top: 1px solid #232323; padding: 11px 0 0 43px; }
.zoom i { width: 69px; height: 3px; background: #5e5e5e; position: relative; }
.zoom i::after { content: ""; position: absolute; left: 33px; top: -5px; width: 12px; height: 12px; border-radius: 50%; background: #999; }
.bottom { flex: 1; margin-top: 2px; background: #282828; border-top-right-radius: 4px; display: flex; justify-content: flex-end; padding: 5px 14px 0 0; overflow: hidden; }
.inspector { width: 406px; background: #383838; flex: none; overflow: hidden; }
.inspector-tab { width: 119px; background: #3c3c3c; padding-left: 12px; gap: 6px; letter-spacing: .1px; }
.inspector-tab svg { margin-top: 3px; }
.inspector .plock + .menu { margin: 0 1px 0 14px; }
.object { height: 75px; border-bottom: 1px solid #1a1a1a; background: #3c3c3c; display: flex; padding: 11px 0 0 9px; }
.objicon { width: 48px; padding-top: 2px; flex: none; }
.objcar { margin-left: 24px; }
.line { display: flex; align-items: center; height: 24px; }
.box { width: 17px; height: 18px; border: 1px solid #1c1c1c; background: #2a2a2a; border-radius: 3px; display: flex; align-items: center; justify-content: center; flex: none; }
.name { width: 236px; height: 23px; background: #2a2a2a; border: 1px solid #1a1a1a; border-radius: 4px; margin: 0 4px 0 8px; padding: 1px 4px; font-weight: 600; color: #d6d6d6; flex: none; }
.static { margin: 0 17px 0 6px; letter-spacing: .3px; }
.two-line { margin: 6px 0 0 -5px; letter-spacing: .6px; }
.drop { height: 22px; border: 1px solid #303030; border-radius: 3px; background: #515151; color: #e4e4e4; display: flex; align-items: center; justify-content: space-between; padding: 0 6px 1px 4px; letter-spacing: .15px; flex: none; }
.drop svg { color: #c8c8c8; }
.tag { width: 140px; margin: 0 16px 0 5px; }
.lay { width: 130px; margin-left: 4px; padding-right: 10px; letter-spacing: 0; }
.comp { display: flex; align-items: center; border-bottom: 1px solid #1a1a1a; background: #3e3e3e; letter-spacing: .25px; }
.comp b { width: 272px; flex: none; }
.pre { margin-left: 13px; }
.cm { margin-left: 15px; }
.transform { height: 28px; border-color: #303030; padding-left: 8px; }
.tri { margin: 0 31px 0 9px; }
.vectors { height: 88px; padding-top: 4px; display: flex; flex-direction: column; gap: 2px; letter-spacing: .3px; color: #b8b8b8; }
.vec { height: 23px; display: flex; align-items: center; padding-left: 24px; }
.lbl { width: 122px; flex: none; }
.link { margin: 0 -19px 0 3px; }
.vec em { width: 18px; margin-left: 6px; flex: none; }
.vec .lbl + em { margin-left: 30px; }
.vec .link + em { margin-left: 30px; }
.fld { width: 58px; height: 24px; background: #2a2a2a; border: 1px solid #1d1d1d; border-radius: 4px; padding: 2px 3px; color: #d6d6d6; flex: none; }
.filter { height: 30px; border-top: 1px solid #1a1a1a; padding-left: 75px; }
.renderer { height: 28px; }
.collider { height: 27px; padding-top: 1px; }
.renderer, .collider { padding-left: 50px; }
.comp .box { margin-right: 8px; }
.material { height: 69px; background: #3c3c3c; border-bottom: 1px solid #1a1a1a; padding-top: 6px; }
.mtitle { height: 20px; display: flex; align-items: center; padding-left: 69px; color: #929292; letter-spacing: .75px; }
.mtitle span { width: 295px; }
.mtitle .help, .mtitle .pre { color: #c4c4c4; }
.mtitle .pre { margin-left: 7px; }
.mshader { display: flex; align-items: center; height: 38px; padding: 3px 0 0 50px; }
.mshader .ball { margin: -38px 2px 0 0; overflow: hidden; }
.mshader span { width: 65px; letter-spacing: .2px; color: #b0b0b0; flex: none; }
.shad { width: 223px; margin: 0 4px 0 0; padding-left: 4px; letter-spacing: .12px; }
.edit { width: 70px; height: 22px; background: #515151; border: 1px solid #303030; border-radius: 3px; padding-left: 6px; color: #e4e4e4; line-height: 19px; flex: none; }
.props { height: 118px; padding-top: 10px; border-bottom: 1px solid #1a1a1a; letter-spacing: .3px; }
.prop { display: flex; align-items: center; padding-left: 24px; }
.plabel { width: 310px; flex: none; }
.color { height: 22px; }
.color .plabel { color: #7fb0f5; letter-spacing: 0; }
.swatch { width: 90px; height: 23px; border: 1px solid #3a72b0; display: flex; align-items: center; gap: 5px; flex: none; background: #2c2c2c; }
.swatch i { width: 57px; height: 20px; background: #b0ecbc; border-bottom: 4px solid #fff; }
.queue { height: 23px; margin-top: 20px; }
.queue .plabel { width: 185px; }
.q { width: 123px; margin-right: 3px; letter-spacing: .5px; }
.num { width: 90px; letter-spacing: .8px; }
.gi { height: 20px; margin-top: 6px; }
.gi .plabel { letter-spacing: .12px; }
.addwrap { padding: 10px 0 0 66px; }
.add { width: 287px; height: 30px; line-height: 28px; text-align: center; color: #e4e4e4; background: #585858; border: 1px solid #303030; border-radius: 4px; letter-spacing: .1px; }
.note { position: absolute; left: 711px; top: 190px; width: 477px; height: 341px; border-radius: 7px; background: #b0ecbc; overflow: hidden; box-shadow: 0 1px 6px rgba(0,0,0,.35); color: #4d6a55; display: flex; flex-direction: column; }
.nhead { height: 17px; background: #a0e8b0; display: flex; justify-content: flex-end; align-items: center; gap: 7px; padding: 1px 18px 0 0; flex: none; }
.codebox { height: 85px; margin: 0 19px 0 18px; background: #e9e9e9; border-radius: 0 0 2px 2px; overflow: hidden; flex: none; }
.code { margin: -5px 0 0; color: #1c1c1c; font: 15.400px/24px "DejaVu Sans Mono", monospace; }
.text { padding: 31px 0 0 17px; height: 204px; font: 16.250px/25.600px "Open Sans", "Noto Sans CJK SC", sans-serif; letter-spacing: .1px; flex: none; }
.text p { margin: 0; height: 25.600px; }
.text code { display: inline-block; height: 21px; line-height: 21px; background: #e9e9e9; border-radius: 3px; color: #8f8f8f; font-family: "DejaVu Sans Mono", monospace; font-size: 14.700px; letter-spacing: .05px; }
.text s { display: inline-block; width: 4.800px; font-size: 10px; color: #bbb; }
.nfoot { display: flex; align-items: center; justify-content: space-between; padding: 5px 18px 0 17px; color: #749d80; font: 13px/20px "Open Sans", "Noto Sans CJK SC", sans-serif; }
```
